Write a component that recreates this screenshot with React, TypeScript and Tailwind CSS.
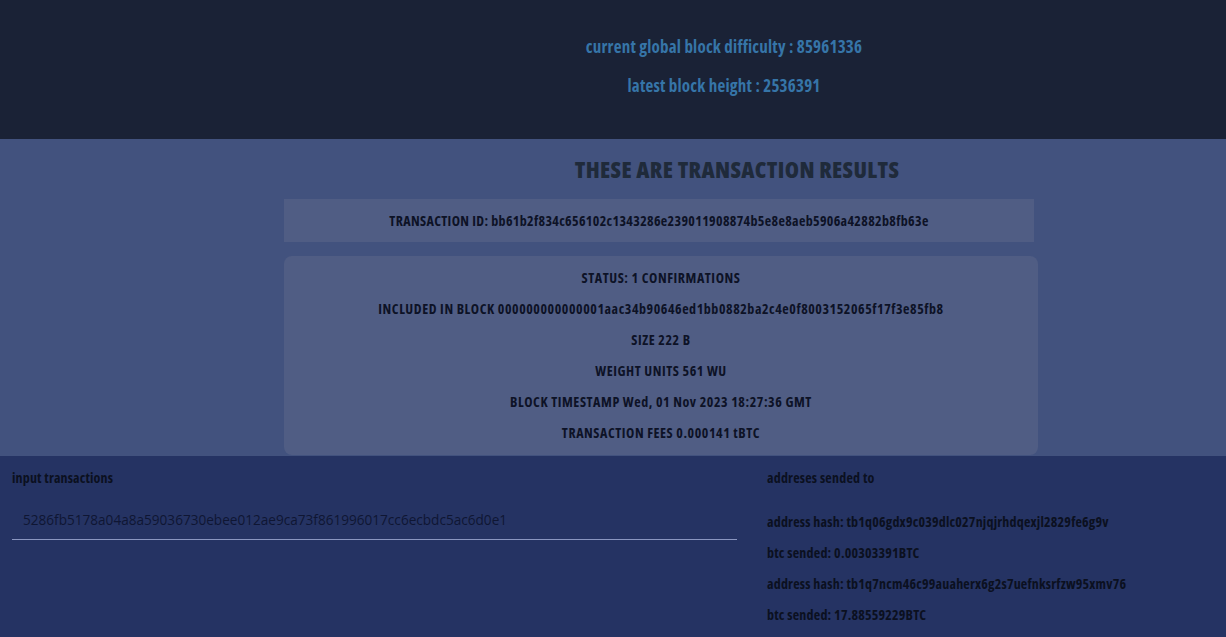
import React from "react";

const cond = { fontFamily: '"Open Sans", "DejaVu Sans", sans-serif', fontStretch: "75%" } as React.CSSProperties;

export default function App() {
  const rows = [
    "STATUS: 1 CONFIRMATIONS",
    "INCLUDED IN BLOCK 000000000000001aac34b90646ed1bb0882ba2c4e0f8003152065f17f3e85fb8",
    "SIZE 222 B",
    "WEIGHT UNITS 561 WU",
    "BLOCK TIMESTAMP Wed, 01 Nov 2023 18:27:36 GMT",
    "TRANSACTION FEES 0.000141 tBTC",
  ];
  const outs = [
    "address hash: tb1q06gdx9c039dlc027njqjrhdqexjl2829fe6g9v",
    "btc sended: 0.00303391BTC",
    "address hash: tb1q7ncm46c99auaherx6g2s7uefnksrfzw95xmv76",
    "btc sended: 17.88559229BTC",
  ];
  return (
    <div className="w-[1226px] h-[637px] overflow-hidden bg-[#253363]" style={cond}>
      <header className="h-[139px] bg-[#1a2236] pl-[222px] pt-[36px] flex flex-col items-center gap-[17px] text-[17px] font-bold tracking-[0.2px] text-[#3675a8] leading-[22px]">
        <div>current global block difficulty : 85961336</div>
        <div>latest block height : 2536391</div>
      </header>
      <section className="h-[317px] bg-[#42527e] flex flex-col">
        <h1 className="pl-[248px] text-center pt-[16px] h-[60px] text-[23px] font-extrabold tracking-[0.35px] leading-[28px] text-[#1f2a3a]">
          THESE ARE TRANSACTION RESULTS
        </h1>
        <div className="ml-[284px] w-[750px] h-[43px] bg-[#505d84] flex items-center justify-center text-[14px] font-bold tracking-[0.34px] text-[#0d1226]">
          TRANSACTION ID: bb61b2f834c656102c1343286e239011908874b5e8e8aeb5906a42882b8fb63e
        </div>
        <div className="ml-[284px] mt-[14px] w-[754px] h-[199px] bg-[#505d84] rounded-lg flex flex-col items-center pt-[12px] text-[14px] font-bold tracking-[0.55px] text-[#0d1226]">
          {rows.map((r) => (
            <div key={r} className="h-[31px] leading-[20px]">{r}</div>
          ))}
        </div>
      </section>
      <section className="flex pt-[13px]">
        <div className="ml-[12px] w-[725px]">
          <div className="text-[14px] font-bold tracking-[0.15px] text-[#0b1020] leading-[18px]">input transactions</div>
          <div
            className="mt-[24px] pl-[11px] pb-[10px] border-b border-[#8a96c0] text-[13.6px] font-normal text-[#0f1633] leading-[18px]"
            style={{ fontFamily: '"Open Sans", sans-serif', fontStretch: "100%" }}
          >
            5286fb5178a04a8a59036730ebee012ae9ca73f861996017cc6ecbdc5ac6d0e1
          </div>
        </div>
        <div className="ml-[30px] text-[14px] font-bold tracking-[0.2px] text-[#0b1020]">
          <div className="leading-[18px] h-[44px]">addreses sended to</div>
          {outs.map((o, i) => (
            <div key={i} className="h-[31px] leading-[18px]">{o}</div>
          ))}
        </div>
      </section>
    </div>
  );
}
